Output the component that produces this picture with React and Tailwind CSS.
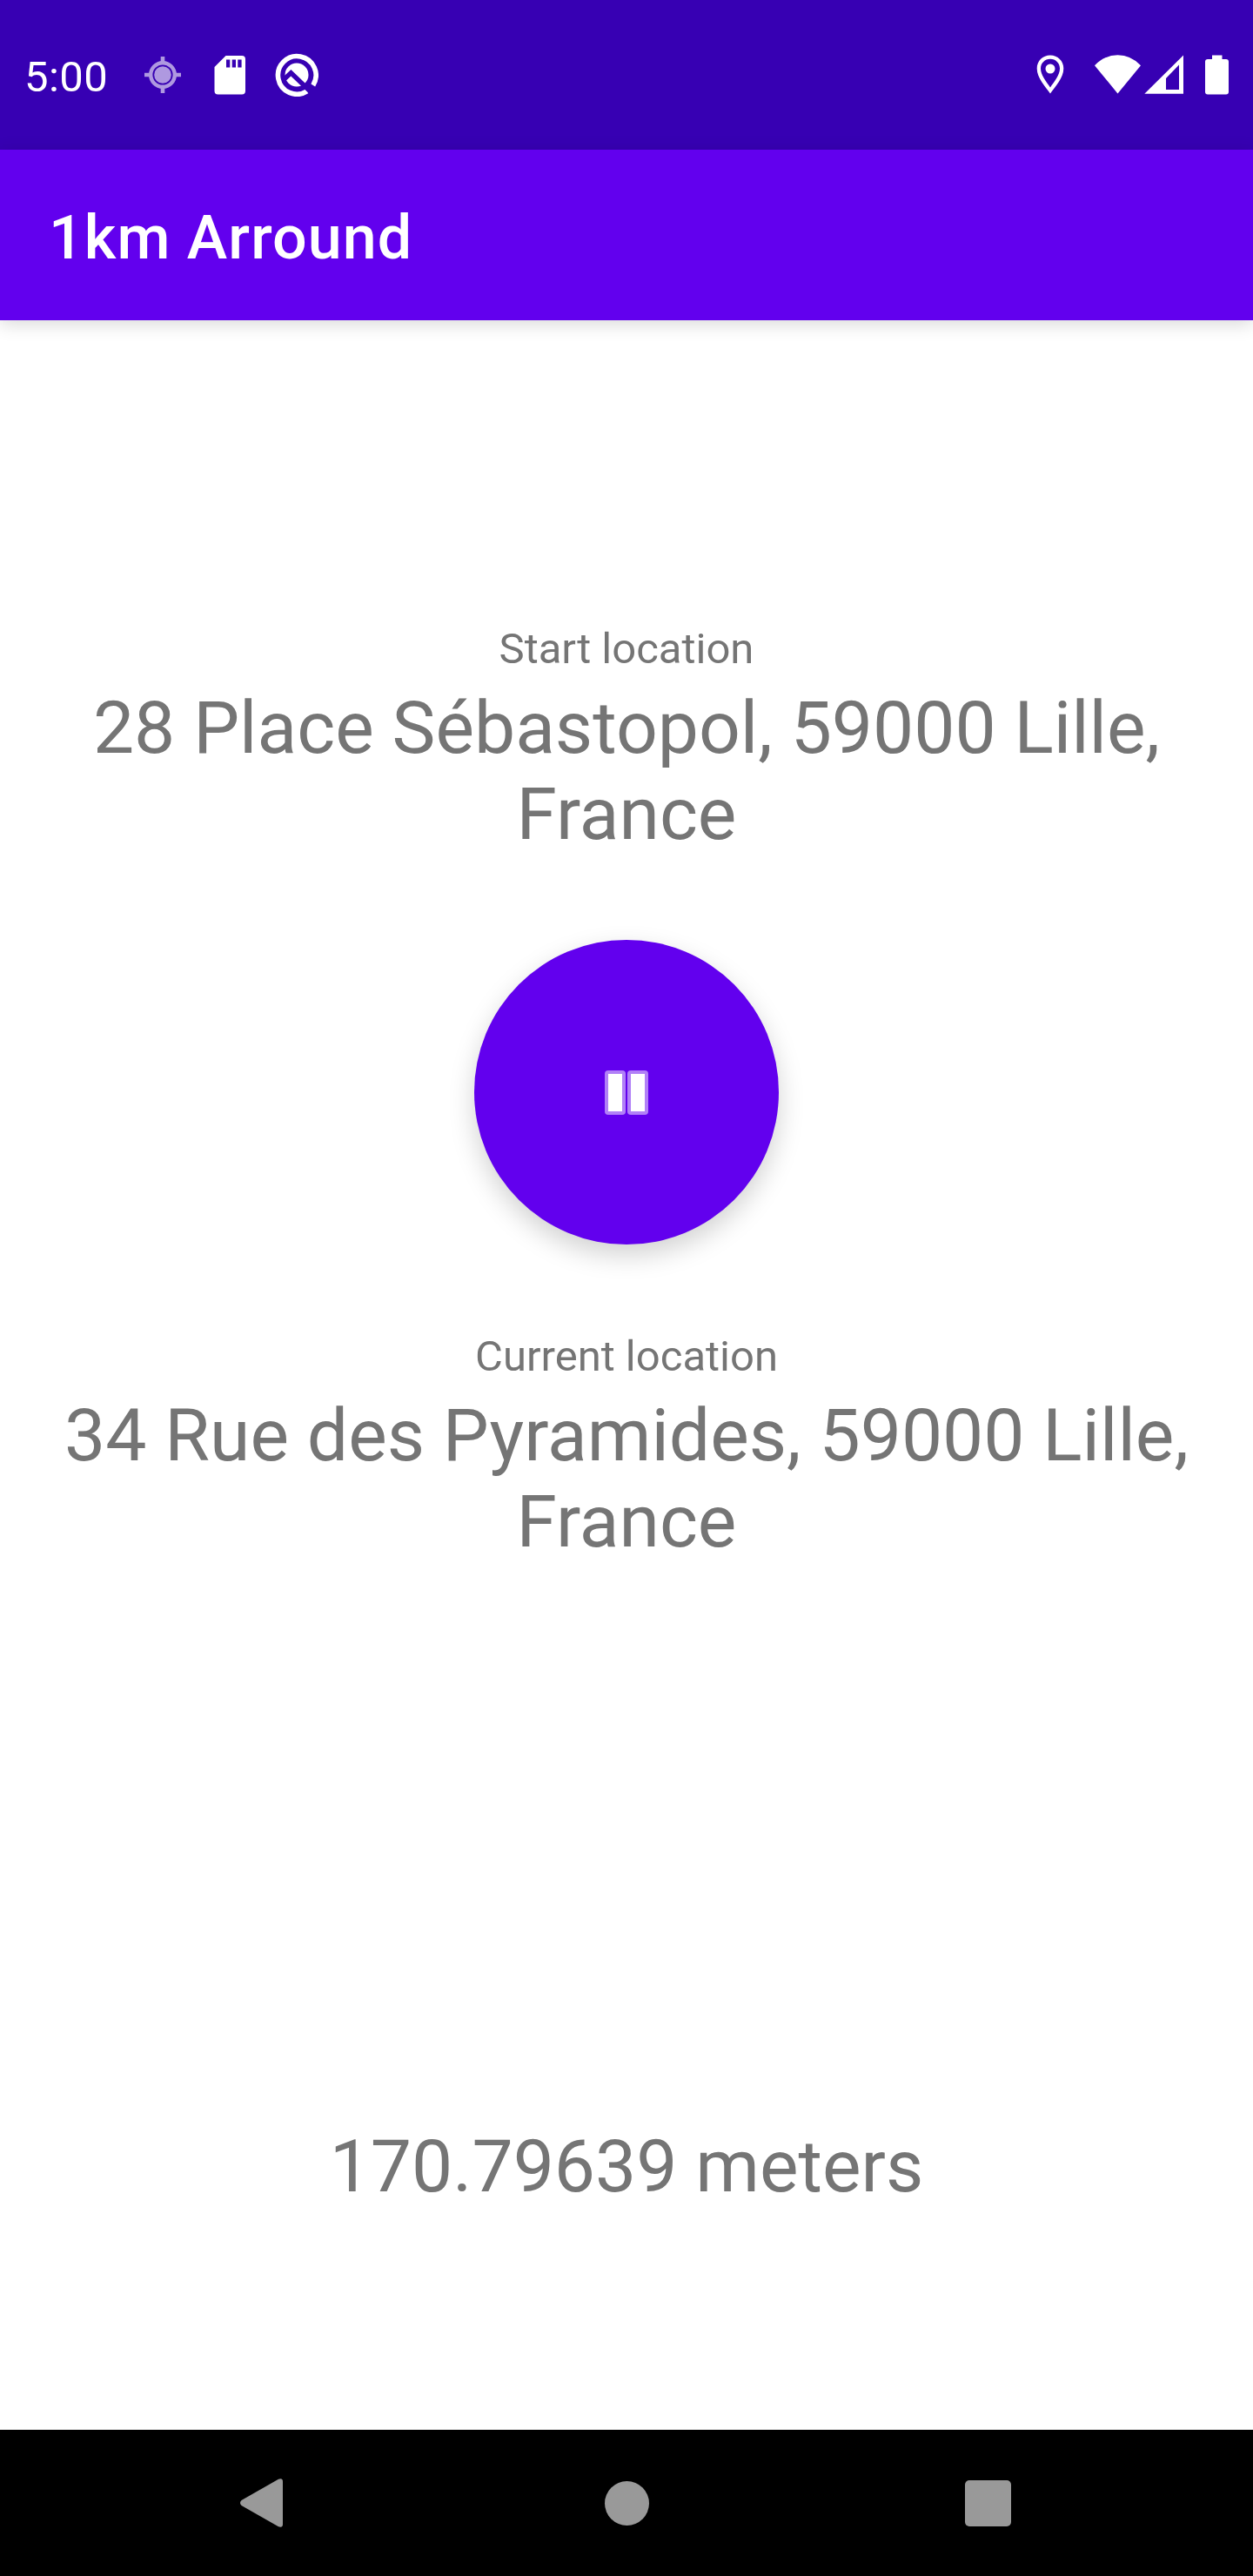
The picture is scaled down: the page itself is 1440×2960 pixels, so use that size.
function StatusBar() {
  return (
    <header className="flex h-[172px] items-center justify-between bg-[#3700b3] text-white">
      <div className="flex h-full items-center">
        <span className="ml-[28px] w-[138px] pt-[5px] text-[49px] leading-[57px] tracking-[0.4px]">5:00</span>
        <svg className="h-[42px] w-[42px] opacity-60" viewBox="0 0 42 42">
          <circle cx="21" cy="21" r="9.8" fill="white" />
          <circle cx="21" cy="21" r="13.8" fill="none" stroke="white" strokeWidth="4.4" />
          <path d="M18.7 0h4.6v6h-4.6zM18.7 36h4.6v6h-4.6zM0 18.7h6v4.6h-6zM36 18.7h6v4.6h-6z" fill="white" />
        </svg>
        <svg className="ml-[38px] h-[46px] w-[36px]" viewBox="0 0 36 46">
          <path
            fill="white"
            fillRule="evenodd"
            d="M13.5 1H32a4 4 0 0 1 4 4v36.500a4 4 0 0 1-4 4H4.500a4 4 0 0 1-4-4V14zM14 5.500v9h4.300v-9zM20.700 5.500v9H25v-9zM27.300 5.500v9h4.300v-9z"
          />
        </svg>
        <svg className="ml-[34px] h-[50px] w-[50px]" viewBox="0 0 50 50">
          <path
            d="M36.500 43.800A21.800 21.800 0 1 1 43.500 36.800"
            transform="translate(.3 .1)"
            fill="none"
            stroke="white"
            strokeWidth="5.600"
          />
          <circle cx="25" cy="25" r="13.500" fill="white" />
          <path d="M9.500 31L18.400 22.700L39 42.500" fill="none" stroke="#3700b3" strokeWidth="5.400" />
        </svg>
      </div>
      <svg className="mr-[28px] h-[46px] w-[222px]" viewBox="1190 63 222 46" fill="white">
        <path
          fillRule="evenodd"
          d="M1207 63.500c-8.600 0-15.300 6.600-15.300 15.200 0 10.500 9.300 20.300 15.300 28.800 6-8.500 15.300-18.300 15.300-28.800 0-8.600-6.700-15.200-15.300-15.200zM1207 67.800c6.200 0 11 4.800 11 10.900 0 7.300-6.200 14.700-11 21.700-4.800-7-11-14.400-11-21.700 0-6.100 4.800-10.900 11-10.900z"
        />
        <circle cx="1207" cy="79" r="5.500" />
        <path d="M1284.500 107.500L1258 75.200Q1269.500 63.300 1284.500 63.300T1311 75.200z" />
        <path fillRule="evenodd" d="M1315.300 107.800L1360 63.500V107.800zM1340 90V103H1355V74.500z" />
        <path d="M1393 63.500h11.500V68h4.500a3 3 0 0 1 3 3v34.500a3 3 0 0 1-3 3h-21a3 3 0 0 1-3-3V71a3 3 0 0 1 3-3h5z" />
      </svg>
    </header>
  );
}

function Location({ label, address }) {
  return (
    <section className="flex w-full flex-col items-center gap-[13px] px-[14px] text-center">
      <h2 className="text-[49px] leading-[57px]">{label}</h2>
      <p className="text-[84px] leading-[99px]">{address}</p>
    </section>
  );
}

function NavBar() {
  return (
    <nav className="flex h-[168px] items-center bg-black pl-[276px]">
      <button aria-label="Back">
        <svg className="block h-[56px] w-[49px]" viewBox="0 0 49 56">
          <path d="M1.500 25L44 .700Q49-1 49 3.500V52.500Q49 57 44 55.300L1.500 31Q-1.500 28 1.500 25z" fill="#999" />
        </svg>
      </button>
      <button aria-label="Home" className="ml-[369.5px] h-[51px] w-[51px] rounded-full bg-[#999]" />
      <button aria-label="Recents" className="ml-[363px] h-[53px] w-[53px] rounded-[5px] bg-[#999]" />
    </nav>
  );
}

export default function App() {
  return (
    <div className="flex h-[2960px] w-[1440px] flex-col overflow-hidden bg-white font-['Roboto',sans-serif] text-[#757575]">
      <StatusBar />
      <div className="flex h-[196px] items-center bg-[#6200ee] pl-[56px] text-white shadow-[0_4px_20px_rgba(0,0,0,0.16)]">
        <h1 className="pt-[5px] text-[70px] leading-[82px] font-medium tracking-[1.05px]">1km Arround</h1>
      </div>
      <main className="flex flex-1 flex-col items-center pt-[349px]">
        <Location label="Start location" address="28 Place Sébastopol, 59000 Lille, France" />
        <button
          aria-label="Pause"
          className="mt-[95px] flex h-[350px] w-[350px] shrink-0 items-center justify-center gap-[2px] rounded-full bg-[#6200ee] shadow-[0_12px_30px_rgba(0,0,0,0.18)]"
        >
          <span className="h-[51px] w-[24px] rounded-[4px] border-4 border-white/50 bg-white bg-clip-padding" />
          <span className="h-[51px] w-[24px] rounded-[4px] border-4 border-white/50 bg-white bg-clip-padding" />
        </button>
        <div className="mt-[100px] w-full">
          <Location label="Current location" address="34 Rue des Pyramides, 59000 Lille, France" />
        </div>
        <p className="mt-[642px] text-[84px] leading-[99px]">170.79639 meters</p>
      </main>
      <NavBar />
    </div>
  );
}
